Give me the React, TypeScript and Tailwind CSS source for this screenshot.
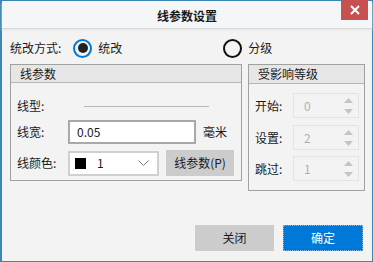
import React from "react";

const font = { fontFamily: '"Noto Sans CJK SC", "Noto Sans", sans-serif' };

function Spin({ value }: { value: string }) {
  return (
    <div className="flex h-[25px] w-[66px] items-center justify-between border border-[#e3e3e3] bg-[#f3f3f3] pl-[10px] pr-[5px] text-[#b0b0b0]">
      <span>{value}</span>
      <div className="flex flex-col gap-[6px]">
        <svg width="9" height="5" viewBox="0 0 9 5">
          <path d="M0 5 L4.5 0 L9 5 Z" fill="#c4c4c4" />
        </svg>
        <svg width="9" height="5" viewBox="0 0 9 5">
          <path d="M0 0 L4.5 5 L9 0 Z" fill="#c4c4c4" />
        </svg>
      </div>
    </div>
  );
}

function Radio({ checked }: { checked: boolean }) {
  return (
    <span
      className={
        checked
          ? "flex h-[19px] w-[19px] items-center justify-center rounded-full border-2 border-[#0078d7]"
          : "flex h-[19px] w-[19px] items-center justify-center rounded-full border-2 border-[#111]"
      }
    >
      {checked && <span className="h-[10px] w-[10px] rounded-full bg-[#222]" />}
    </span>
  );
}

export default function App() {
  return (
    <div className="h-[262px] w-[373px] overflow-hidden bg-[#f3f3f3] text-[12px] text-[#1a1a1a]" style={font}>
      <div className="flex h-full flex-col border-b border-l-2 border-r border-t border-[#3a86b4]">
        {/* Title bar */}
        <div className="relative flex h-[27px] shrink-0 items-center justify-center bg-[#f5f6f7] pt-[2px] shadow-[0_1px_0_#d8d8d8,0_2px_2px_#e4e4e4]">
          <span className="font-bold">线参数设置</span>
          <div className="absolute right-[4px] top-[-1px] flex h-[20px] w-[27px] items-center justify-center bg-[#c75050]">
            <svg width="10" height="10" viewBox="0 0 10 10">
              <path d="M1 1 L9 9 M9 1 L1 9" stroke="#fff" strokeWidth="2" />
            </svg>
          </div>
        </div>

        {/* Mode row */}
        <div className="flex h-[36px] items-center pl-[8px] pt-[4px]">
          <span>统改方式:</span>
          <span className="ml-[12px]"><Radio checked /></span>
          <span className="ml-[6px]">统改</span>
          <span className="ml-[101px]"><Radio checked={false} /></span>
          <span className="ml-[6px]">分级</span>
        </div>

        <div className="flex gap-[6px] pl-[8px]">
          {/* 线参数 group */}
          <div className="flex h-[117px] w-[232px] flex-col border border-[#a0a0a0]">
            <div className="flex h-[18px] shrink-0 items-center border-b border-[#b4b4b4] bg-[#e6e6e6] pl-[9px]">线参数</div>
            <div className="mt-[16px] flex h-[14px] items-center pl-[6px]">
              <span className="w-[67px]">线型:</span>
              <span className="h-px w-[125px] bg-[#b8b8b8]" />
            </div>
            <div className="mt-[7px] flex items-center pl-[6px]">
              <span className="w-[51px]">线宽:</span>
              <div className="flex h-[24px] w-[128px] items-center border-2 border-[#a9a9a9] bg-white pl-[7px]">0.05</div>
              <span className="ml-[7px]">毫米</span>
            </div>
            <div className="mt-[6px] flex items-center pl-[6px]">
              <span className="w-[51px]">线颜色:</span>
              <div className="flex h-[25px] w-[91px] items-center border-2 border-[#d0d0d0] bg-white pl-[5px]">
                <span className="h-[11px] w-[11px] bg-black" />
                <span className="ml-[11px]">1</span>
                <svg className="ml-auto mr-[8px]" width="11" height="6" viewBox="0 0 11 6">
                  <path d="M0.5 0.5 L5.5 5.5 L10.5 0.5" stroke="#777" fill="none" strokeWidth="1" />
                </svg>
              </div>
              <div className="ml-[7px] flex h-[26px] w-[68px] items-center justify-center bg-[#cccccc]">线参数(P)</div>
            </div>
          </div>

          {/* 受影响等级 group */}
          <div className="flex h-[127px] w-[117px] flex-col border border-[#a0a0a0]">
            <div className="flex h-[19px] shrink-0 items-center border-b border-[#b4b4b4] bg-[#e6e6e6] pl-[9px]">受影响等级</div>
            <div className="mt-[9px] flex items-center pl-[6px]">
              <span className="w-[38px]">开始:</span>
              <Spin value="0" />
            </div>
            <div className="mt-[7px] flex items-center pl-[6px]">
              <span className="w-[38px]">设置:</span>
              <Spin value="2" />
            </div>
            <div className="mt-[6px] flex items-center pl-[6px]">
              <span className="w-[38px]">跳过:</span>
              <Spin value="1" />
            </div>
          </div>
        </div>

        {/* Buttons */}
        <div className="mt-auto mb-[10px] flex justify-end gap-[9px] pr-[9px]">
          <div className="flex h-[26px] w-[79px] items-center justify-center bg-[#cccccc]">关闭</div>
          <div className="flex h-[26px] w-[80px] items-center justify-center border border-dotted border-[#7fb6e6] bg-[#0078d7] text-white">确定</div>
        </div>
      </div>
    </div>
  );
}
